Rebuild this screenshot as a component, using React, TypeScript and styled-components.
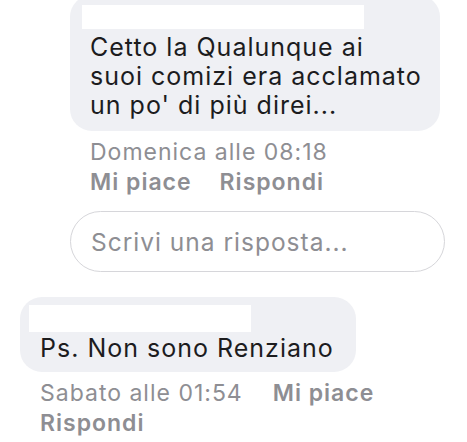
import React from "react";
import styled, { createGlobalStyle } from "styled-components";

const Global = createGlobalStyle`
  html, body { margin: 0; padding: 0; background: #ffffff; }
  body {
    font-family: Inter, "Noto Sans", "Liberation Sans", sans-serif;
    -webkit-font-smoothing: antialiased;
  }
`;

const Page = styled.div`
  width: 467px;
  height: 442px;
  overflow: hidden;
  display: flex;
  flex-direction: column;
`;

const Thread = styled.div<{ $indent: number; $top: number }>`
  display: flex;
  flex-direction: column;
  align-items: flex-start;
  padding-left: ${(p) => p.$indent}px;
  padding-right: 22px;
  margin-top: ${(p) => p.$top}px;
`;

const Bubble = styled.div<{ $pad: string }>`
  background: #eff0f4;
  border-radius: 22px;
  padding: ${(p) => p.$pad};
  display: flex;
  flex-direction: column;
  align-items: flex-start;
`;

const Redacted = styled.div<{ $w: number; $h: number }>`
  width: ${(p) => p.$w}px;
  height: ${(p) => p.$h}px;
  background: #ffffff;
`;

const Body = styled.div<{ $top: number; $indent: number }>`
  margin-top: ${(p) => p.$top}px;
  padding-left: ${(p) => p.$indent}px;
  font-size: 25px;
  line-height: 29px;
  letter-spacing: 1px;
  color: #1c1c1e;
  white-space: nowrap;
`;

const Meta = styled.div<{ $width?: number }>`
  display: flex;
  flex-wrap: wrap;
  column-gap: 30px;
  margin-top: 6px;
  padding-left: 20px;
  width: ${(p) => (p.$width ? `${p.$width}px` : "auto")};
  font-size: 23px;
  line-height: 30px;
  letter-spacing: 1px;
  color: #8e8e93;
`;

const MetaStack = styled(Meta)`
  flex-direction: column;
`;

const Actions = styled.div`
  display: flex;
  gap: 28px;
`;

const Time = styled.span``;

const Action = styled.span`
  font-weight: 600;
`;

const ReplyBox = styled.div`
  box-sizing: border-box;
  width: 375px;
  height: 61px;
  margin-top: 14px;
  border: 1px solid #d6d6da;
  border-radius: 31px;
  display: flex;
  align-items: center;
  padding-left: 20px;
  font-size: 24.5px;
  letter-spacing: 1px;
  color: #8e8e93;
`;

export default function App() {
  return (
    <Page>
      <Global />
      <Thread $indent={70} $top={-5}>
        <Bubble $pad="10px 18px 11px 12px">
          <Redacted $w={282} $h={24} />
          <Body $top={4} $indent={8}>
            Cetto la Qualunque ai
            <br />
            suoi comizi era acclamato
            <br />
            un po' di più direi...
          </Body>
        </Bubble>
        <MetaStack>
          <Time>Domenica alle 08:18</Time>
          <Actions>
            <Action>Mi piace</Action>
            <Action>Rispondi</Action>
          </Actions>
        </MetaStack>
        <ReplyBox>Scrivi una risposta...</ReplyBox>
      </Thread>
      <Thread $indent={20} $top={25}>
        <Bubble $pad="8px 22px 9px 9px">
          <Redacted $w={222} $h={27} />
          <Body $top={2} $indent={11}>
            Ps. Non sono Renziano
          </Body>
        </Bubble>
        <Meta $width={360}>
          <Time>Sabato alle 01:54</Time>
          <Action>Mi piace</Action>
          <Action>Rispondi</Action>
        </Meta>
      </Thread>
    </Page>
  );
}
